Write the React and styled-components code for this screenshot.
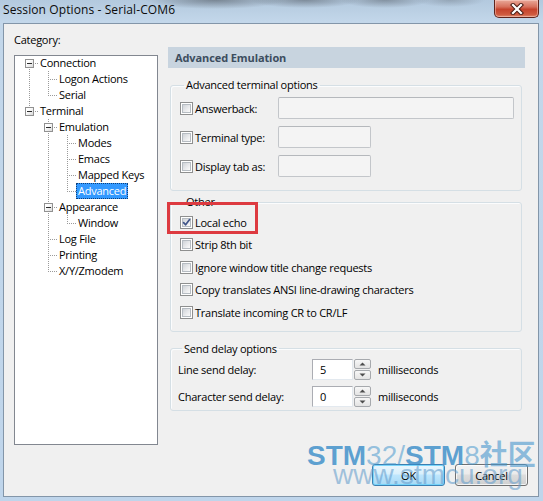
import React from "react";
import styled, { createGlobalStyle } from "styled-components";

const UI_FONT = `"Open Sans", "Noto Sans", "DejaVu Sans", sans-serif`;

const GlobalStyle = createGlobalStyle`
  html, body { margin: 0; padding: 0; }
  body {
    width: 543px;
    height: 501px;
    overflow: hidden;
    font-family: ${UI_FONT};
    font-size: 11px;
    color: #000;
  }
  *, *::before, *::after { box-sizing: border-box; }
`;

/* ---------- window frame ---------- */

const Window = styled.div`
  position: relative;
  width: 543px;
  height: 501px;
  display: flex;
  flex-direction: column;
  padding: 0 4px 4px 3px;
  background:
    radial-gradient(ellipse 70px 9px at 215px 0px, rgba(72, 78, 86, 0.55), transparent),
    radial-gradient(ellipse 55px 8px at 305px 0px, rgba(72, 78, 86, 0.5), transparent),
    radial-gradient(ellipse 45px 8px at 385px 0px, rgba(72, 78, 86, 0.45), transparent),
    radial-gradient(ellipse 35px 7px at 450px 0px, rgba(90, 98, 108, 0.35), transparent),
    linear-gradient(180deg, #b3c9de 0px, #c3d7ea 22px, #bfd5eb 100%);
`;

const TitleBar = styled.div`
  height: 23px;
  display: flex;
  align-items: flex-start;
  justify-content: space-between;
`;

const Title = styled.span`
  font-size: 12px;
  line-height: 20px;
  letter-spacing: 0.1px;
  color: #0b0b0b;
`;

const CloseButton = styled.div`
  width: 45px;
  height: 18px;
  display: flex;
  align-items: center;
  justify-content: center;
  border: 1px solid #5e241c;
  border-top: none;
  border-radius: 0 0 5px 5px;
  background: linear-gradient(
    180deg,
    #e9a999 0%,
    #d7715d 40%,
    #c5432c 55%,
    #cf5a3f 85%,
    #de8a6e 100%
  );
  box-shadow: inset 0 0 0 1px rgba(255, 220, 210, 0.45);
`;

const Client = styled.div`
  flex: 1;
  display: flex;
  flex-direction: column;
  background: #f0f0f0;
  border: 1px solid #8396a9;
`;

const Main = styled.div`
  flex: 1;
  display: flex;
`;

/* ---------- category tree ---------- */

const LeftColumn = styled.div`
  width: 144px;
  margin-left: 10px;
  display: flex;
  flex-direction: column;
`;

const CategoryLabel = styled.div`
  margin-top: 8px;
  line-height: 16px;
  letter-spacing: -0.25px;
`;

const TreeBox = styled.div`
  margin-top: 7px;
  height: 390px;
  background: #fff;
  border: 1px solid #828790;
  padding: 0 0 0 5px;
`;

const TreeRow = styled.div`
  display: flex;
  align-items: center;
  height: 16px;
  &:first-child { margin-top: -1px; }
`;

const dotV = `repeating-linear-gradient(180deg, #9a9a9a 0 1px, transparent 1px 2px)`;
const dotH = `repeating-linear-gradient(90deg, #9a9a9a 0 1px, transparent 1px 2px)`;

const Guide = styled.span`
  position: relative;
  flex: none;
  width: 19px;
  height: 16px;

  &::before {
    content: "";
    display: ${(p) => (p.$up || p.$down ? "block" : "none")};
    position: absolute;
    left: 9px;
    width: 1px;
    top: ${(p) => (p.$up ? "0" : "8px")};
    bottom: ${(p) => (p.$down ? "0" : "8px")};
    background: ${dotV};
  }

  &::after {
    content: "";
    display: ${(p) => (p.$across ? "block" : "none")};
    position: absolute;
    left: 9px;
    top: 8px;
    width: 10px;
    height: 1px;
    background: ${dotH};
  }
`;

const Expander = styled.span`
  position: absolute;
  z-index: 1;
  left: 5px;
  top: 4px;
  width: 9px;
  height: 9px;
  border: 1px solid #919191;
  background: linear-gradient(135deg, #ffffff 30%, #d9d9d9);
  display: flex;
  align-items: center;
  justify-content: center;

  &::after {
    content: "";
    width: 5px;
    height: 1px;
    background: #2b2b2b;
  }
`;

const NodeLabel = styled.span`
  margin-left: -1px;
  padding: 0 1px;
  line-height: 14px;
  white-space: nowrap;
  letter-spacing: -0.25px;
  border: 1px ${(p) => (p.$selected ? "dotted #0d3f7a" : "solid transparent")};
  background: ${(p) => (p.$selected ? "#3399ff" : "transparent")};
  color: ${(p) => (p.$selected ? "#fff" : "#000")};
`;

/* ---------- settings panel ---------- */

const RightColumn = styled.div`
  width: 357px;
  margin-left: 10px;
  margin-top: 23px;
  display: flex;
  flex-direction: column;
`;

const PanelHeader = styled.div`
  height: 21px;
  line-height: 21px;
  padding-left: 7px;
  background: #c8d4df;
  color: #3c4d5e;
  font-weight: 700;
  letter-spacing: -0.1px;
`;

const Group = styled.fieldset`
  margin: ${(p) => p.$gap}px 3px 0 2px;
  min-width: 0;
  border: 1px solid #d5dfe5;
  border-radius: 3px;
  padding: ${(p) => p.$pad};
  box-shadow: inset 1px 1px 0 #fbfcfd;
`;

const Legend = styled.legend`
  margin-left: 4px;
  padding: 0 2px;
  line-height: 16px;
  letter-spacing: -0.25px;
`;

const Stack = styled.div`
  display: flex;
  flex-direction: column;
  gap: ${(p) => p.$gap}px;
`;

const FieldRow = styled.div`
  position: relative;
  display: flex;
  align-items: center;
  height: ${(p) => p.$h}px;
`;

const CheckLabel = styled.label`
  display: flex;
  align-items: center;
  gap: 2px;
  width: ${(p) => (p.$w ? `${p.$w}px` : "auto")};
  letter-spacing: -0.25px;
  white-space: nowrap;
`;

const Box = styled.span`
  flex: none;
  width: 13px;
  height: 13px;
  border: 1px solid #8e8f8f;
  background: #fff;
  padding: 1px;
  display: flex;
`;

const BoxInner = styled.span`
  flex: 1;
  border: 1px solid #b6bcc2;
  background: linear-gradient(135deg, #cfd3d8 0%, #e9eaec 55%, #fbfbfb 100%);
  position: relative;
`;

const TextField = styled.div`
  width: ${(p) => p.$w}px;
  height: 22px;
  border: 1px solid #c3c6ca;
  border-top-color: #b5b8bc;
  border-radius: 2px;
  background: #f4f4f4;
`;

const Highlight = styled.span`
  position: absolute;
  left: -13px;
  top: -9px;
  width: 91px;
  height: 32px;
  border: 3px solid #dd3a40;
  pointer-events: none;
`;

const DelayLabel = styled.span`
  width: 134px;
  letter-spacing: -0.25px;
`;

const SpinBox = styled.div`
  display: flex;
  gap: 1px;
  height: 21px;
`;

const SpinValue = styled.div`
  width: 41px;
  height: 21px;
  padding-left: 7px;
  line-height: 19px;
  background: #fff;
  border: 1px solid #abadb3;
  border-right-color: #e3e9ef;
  border-bottom-color: #e3e9ef;
`;

const SpinButtons = styled.div`
  width: 17px;
  display: flex;
  flex-direction: column;
  gap: 1px;
`;

const SpinButton = styled.div`
  flex: 1;
  border: 1px solid #a6a9ad;
  border-radius: 2px;
  background: linear-gradient(180deg, #f7f7f7, #e3e3e3);
  display: flex;
  align-items: center;
  justify-content: center;
`;

const Units = styled.span`
  margin-left: 7px;
  letter-spacing: -0.25px;
`;

/* ---------- dialog buttons ---------- */

const Footer = styled.div`
  display: flex;
  justify-content: flex-end;
  gap: 10px;
  padding: 0 10px 10px 0;
`;

const Button = styled.div`
  width: 73px;
  height: 22px;
  display: flex;
  align-items: center;
  justify-content: center;
  letter-spacing: -0.25px;
  border-radius: 3px;
  border: 1px solid ${(p) => (p.$default ? "#3c7fb1" : "#707070")};
  background: ${(p) =>
    p.$default
      ? "linear-gradient(180deg, #eaf6fd 0%, #d9f0fc 45%, #bee6fd 50%, #a7d9f5 100%)"
      : "linear-gradient(180deg, #f2f2f2 0%, #ebebeb 45%, #dddddd 50%, #cfcfcf 100%)"};
  box-shadow: inset 0 0 0 1px
    ${(p) => (p.$default ? "rgba(110, 210, 250, 0.9)" : "rgba(255, 255, 255, 0.75)")};
`;

/* ---------- site stamp over the corner ---------- */

const Stamp = styled.div`
  position: absolute;
  left: 307px;
  top: 444px;
  font-family: "Liberation Sans", Arial, "Noto Sans CJK SC", sans-serif;
  font-size: 28px;
  line-height: 19px;
  white-space: nowrap;
  pointer-events: none;
`;

const StampLine = styled.div`
  padding-left: ${(p) => p.$indent || 0}px;
`;

const StampPart = styled.span`
  font-weight: ${(p) => (p.$bold ? 700 : 400)};
  color: ${(p) => p.$color};
  font-family: ${(p) =>
    p.$cjk
      ? `"Noto Sans CJK SC", sans-serif`
      : `"Liberation Sans", Arial, sans-serif`};
`;

/* ---------- data ---------- */

const categories = [
  {
    label: "Connection",
    children: [{ label: "Logon Actions" }, { label: "Serial" }],
  },
  {
    label: "Terminal",
    children: [
      {
        label: "Emulation",
        children: [
          { label: "Modes" },
          { label: "Emacs" },
          { label: "Mapped Keys" },
          { label: "Advanced", selected: true },
        ],
      },
      { label: "Appearance", children: [{ label: "Window" }] },
      { label: "Log File" },
      { label: "Printing" },
      { label: "X/Y/Zmodem" },
    ],
  },
];

function flatten(nodes, level = 0, trail = [], out = []) {
  nodes.forEach((node, i) => {
    const isLast = i === nodes.length - 1;
    const isFirstRoot = level === 0 && i === 0;
    out.push({
      label: node.label,
      selected: !!node.selected,
      hasChildren: !!node.children,
      trail,
      up: !isFirstRoot,
      down: !isLast,
    });
    if (node.children) flatten(node.children, level + 1, [...trail, !isLast], out);
  });
  return out;
}

const treeRows = flatten(categories);

const terminalOptions = [
  { label: "Answerback:", width: 236 },
  { label: "Terminal type:", width: 93 },
  { label: "Display tab as:", width: 93 },
];

const otherOptions = [
  { label: "Local echo", checked: true, marked: true },
  { label: "Strip 8th bit" },
  { label: "Ignore window title change requests" },
  { label: "Copy translates ANSI line-drawing characters" },
  { label: "Translate incoming CR to CR/LF" },
];

const delays = [
  { label: "Line send delay:", value: "5" },
  { label: "Character send delay:", value: "0" },
];

/* ---------- pieces ---------- */

function Checkbox({ checked }) {
  return (
    <Box>
      <BoxInner>
        {checked && (
          <svg
            width="9"
            height="9"
            viewBox="0 0 9 9"
            style={{ position: "absolute", left: -1, top: -1 }}
          >
            <path
              d="M1.6 4.6 L3.6 6.8 L7.6 1.6"
              fill="none"
              stroke="#3f5488"
              strokeWidth="1.7"
              strokeLinecap="round"
              strokeLinejoin="round"
            />
          </svg>
        )}
      </BoxInner>
    </Box>
  );
}

function Arrow({ up }) {
  return (
    <svg width="7" height="4" viewBox="0 0 7 4">
      <path d={up ? "M0.5 3.5 L3.5 0.5 L6.5 3.5 Z" : "M0.5 0.5 L3.5 3.5 L6.5 0.5 Z"} fill="#4d4d4d" />
    </svg>
  );
}

function CloseGlyph() {
  return (
    <svg width="14" height="12" viewBox="0 0 14 12">
      <path d="M3 2 L11 10 M11 2 L3 10" stroke="#4a1c14" strokeWidth="4.2" strokeLinecap="square" />
      <path d="M3 2 L11 10 M11 2 L3 10" stroke="#ffffff" strokeWidth="2.2" strokeLinecap="square" />
    </svg>
  );
}

export default function App() {
  return (
    <>
      <GlobalStyle />
      <Window>
        <TitleBar>
          <Title>Session Options - Serial-COM6</Title>
          <CloseButton>
            <CloseGlyph />
          </CloseButton>
        </TitleBar>

        <Client>
          <Main>
            <LeftColumn>
              <CategoryLabel>Category:</CategoryLabel>
              <TreeBox>
                {treeRows.map((row) => (
                  <TreeRow key={row.label}>
                    {row.trail.map((cont, k) => (
                      <Guide key={k} $up={cont} $down={cont} />
                    ))}
                    <Guide $up={row.up} $down={row.down} $across>
                      {row.hasChildren && <Expander />}
                    </Guide>
                    <NodeLabel $selected={row.selected}>{row.label}</NodeLabel>
                  </TreeRow>
                ))}
              </TreeBox>
            </LeftColumn>

            <RightColumn>
              <PanelHeader>Advanced Emulation</PanelHeader>

              <Group $gap={9} $pad="4px 0 13px 9px">
                <Legend>Advanced terminal options</Legend>
                <Stack $gap={7}>
                  {terminalOptions.map((opt) => (
                    <FieldRow key={opt.label} $h={22}>
                      <CheckLabel $w={98}>
                        <Checkbox />
                        {opt.label}
                      </CheckLabel>
                      <TextField $w={opt.width} />
                    </FieldRow>
                  ))}
                </Stack>
              </Group>

              <Group $gap={3} $pad="1px 0 7px 9px">
                <Legend>Other</Legend>
                <Stack $gap={0}>
                  {otherOptions.map((opt) => (
                    <FieldRow key={opt.label} $h={22.5}>
                      <CheckLabel>
                        <Checkbox checked={opt.checked} />
                        {opt.label}
                      </CheckLabel>
                      {opt.marked && <Highlight />}
                    </FieldRow>
                  ))}
                </Stack>
              </Group>

              <Group $gap={9} $pad="2px 0 3px 7px">
                <Legend>Send delay options</Legend>
                <Stack $gap={6}>
                  {delays.map((d) => (
                    <FieldRow key={d.label} $h={21}>
                      <DelayLabel>{d.label}</DelayLabel>
                      <SpinBox>
                        <SpinValue>{d.value}</SpinValue>
                        <SpinButtons>
                          <SpinButton>
                            <Arrow up />
                          </SpinButton>
                          <SpinButton>
                            <Arrow />
                          </SpinButton>
                        </SpinButtons>
                      </SpinBox>
                      <Units>milliseconds</Units>
                    </FieldRow>
                  ))}
                </Stack>
              </Group>
            </RightColumn>
          </Main>

          <Footer>
            <Button $default>OK</Button>
            <Button>Cancel</Button>
          </Footer>
        </Client>

        <Stamp>
          <StampLine>
            <StampPart $bold $color="rgba(52, 138, 200, 0.78)">STM</StampPart>
            <StampPart $color="rgba(70, 150, 205, 0.55)">32/</StampPart>
            <StampPart $bold $color="rgba(52, 138, 200, 0.78)">STM</StampPart>
            <StampPart $color="rgba(70, 150, 205, 0.55)">8</StampPart>
            <StampPart $cjk $bold $color="rgba(70, 150, 205, 0.6)">社区</StampPart>
          </StampLine>
          <StampLine $indent={26}>
            <StampPart $color="rgba(105, 160, 205, 0.6)">www.stmcu.org</StampPart>
          </StampLine>
        </Stamp>
      </Window>
    </>
  );
}
